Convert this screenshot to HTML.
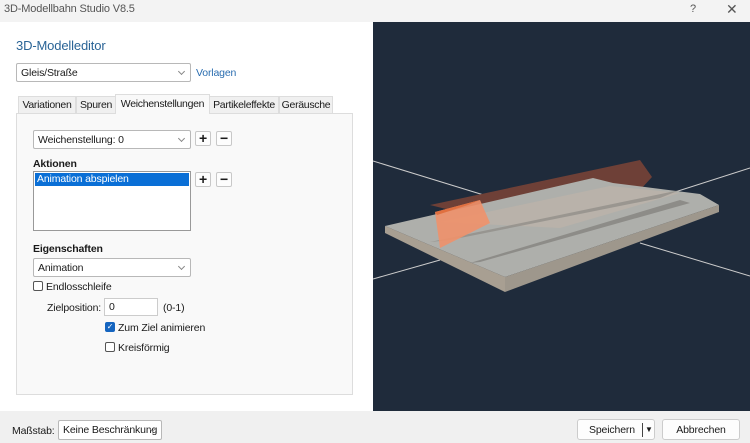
<!DOCTYPE html>
<html><head><meta charset="utf-8"><style>
body{margin:0;width:750px;height:443px;overflow:hidden;font-family:"Liberation Sans",sans-serif;font-size:10.5px;letter-spacing:-0.15px;color:#1a1a1a;background:#fff;position:relative}
.abs{position:absolute;white-space:nowrap}
.title{left:0;top:0;width:750px;height:22px;background:#f3f3f3;color:#555;font-size:11px}
.combo{position:absolute;background:#fff;border:1px solid #b8b8b8;border-radius:2px;box-sizing:border-box;height:19px;line-height:18px;padding-left:4px;white-space:nowrap}
.combo:after{content:"";position:absolute;right:6px;top:5px;width:4px;height:4px;border-right:1px solid #888;border-bottom:1px solid #888;transform:rotate(45deg)}
.btn{position:absolute;width:16px;height:15px;border:1px solid #c8c8c8;border-radius:2px;background:#fdfdfd;box-sizing:border-box;text-align:center;font-weight:bold;line-height:12px;font-size:14px}
.cb{position:absolute;width:10px;height:10px;border:1px solid #555;border-radius:2px;box-sizing:border-box;background:#fff}
.tab{position:absolute;top:96px;height:17px;line-height:17px;background:#f0f0f0;border:1px solid #ddd;border-bottom:none;box-sizing:border-box;text-align:center;white-space:nowrap;letter-spacing:-0.3px}
</style></head><body>
<div class="abs title"><span style="position:absolute;left:4px;top:3px">3D-Modellbahn Studio V8.5</span><span style="position:absolute;left:690px;top:3px">?</span><span style="position:absolute;left:726px;top:1px;font-size:14px">✕</span></div>
<div class="abs" style="left:16px;top:38px;font-size:13px;color:#2a6496">3D-Modelleditor</div>
<div class="combo" style="left:16px;top:63px;width:175px;height:19px">Gleis/Straße</div>
<div class="abs" style="left:196px;top:67px;color:#2a6db0">Vorlagen</div>
<div class="abs" style="left:16px;top:113px;width:337px;height:282px;background:#f9f9f9;border:1px solid #ddd;box-sizing:border-box"></div>
<div class="tab" style="left:18px;width:58px">Variationen</div>
<div class="tab" style="left:76px;width:40px">Spuren</div>
<div class="tab" style="left:115px;top:94px;height:20px;line-height:19px;width:95px;background:#f9f9f9">Weichenstellungen</div>
<div class="tab" style="left:209px;width:70px">Partikeleffekte</div>
<div class="tab" style="left:279px;width:54px">Geräusche</div>
<div class="combo" style="left:33px;top:130px;width:158px">Weichenstellung: 0</div>
<div class="btn" style="left:195px;top:131px">+</div><div class="btn" style="left:216px;top:131px">−</div>
<div class="abs" style="left:33px;top:158px;font-weight:bold">Aktionen</div>
<div class="abs" style="left:33px;top:171px;width:158px;height:60px;background:#fff;border:1px solid #999;box-sizing:border-box"><div style="background:#0a6fd6;color:#fff;margin:1px;height:13px;line-height:13px;padding-left:2px">Animation abspielen</div></div>
<div class="btn" style="left:195px;top:172px">+</div><div class="btn" style="left:216px;top:172px">−</div>
<div class="abs" style="left:33px;top:243px;font-weight:bold">Eigenschaften</div>
<div class="combo" style="left:33px;top:258px;width:158px">Animation</div>
<div class="cb" style="left:33px;top:281px"></div><div class="abs" style="left:46px;top:281px">Endlosschleife</div>
<div class="abs" style="left:47px;top:302px">Zielposition:</div>
<div class="abs" style="left:104px;top:298px;width:54px;height:18px;background:#fff;border:1px solid #ccc;box-sizing:border-box;padding-left:4px;line-height:16px">0</div>
<div class="abs" style="left:163px;top:302px">(0-1)</div>
<div class="cb" style="left:105px;top:322px;background:#1565c0;border-color:#1565c0;color:#fff;font-size:8px;line-height:8px;text-align:center">✓</div><div class="abs" style="left:118px;top:322px">Zum Ziel animieren</div>
<div class="cb" style="left:105px;top:342px"></div><div class="abs" style="left:118px;top:342px">Kreisförmig</div>
<div class="abs" style="left:0;top:411px;width:750px;height:32px;background:#f0f0f0"></div>
<div class="abs" style="left:12px;top:425px">Maßstab:</div>
<div class="combo" style="left:58px;top:420px;width:104px;height:20px;overflow:hidden;padding-right:16px;line-height:19px">Keine Beschränkung</div>
<div class="abs" style="left:577px;top:419px;width:78px;height:21px;background:#fdfdfd;border:1px solid #ccc;border-radius:3px;box-sizing:border-box;line-height:20px;padding-left:11px">Speichern<span style="position:absolute;left:64px;top:3px;height:14px;border-left:1px solid #444"></span><span style="position:absolute;left:67px;top:0;font-size:8px">▼</span></div>
<div class="abs" style="left:662px;top:419px;width:78px;height:21px;background:#fdfdfd;border:1px solid #ccc;border-radius:3px;box-sizing:border-box;line-height:20px;text-align:center">Abbrechen</div>
<svg class="abs" style="left:373px;top:22px" width="377" height="389" viewBox="373 22 377 389">
<rect x="373" y="22" width="377" height="389" fill="#1f2b3b"/>
<line x1="373" y1="161" x2="500" y2="200" stroke="#ccc" stroke-width="1"/>
<line x1="650" y1="200" x2="750" y2="168" stroke="#ccc"/>
<line x1="373" y1="279" x2="440" y2="260" stroke="#ccc"/>
<line x1="640" y1="243" x2="750" y2="276" stroke="#ccc"/>
<polygon points="430,205 640,160 652,177 640,190 470,215" fill="#6e4037"/>
<polygon points="385,226 593,178 613,183 700,194 719,205 505,277" fill="#aeafab"/>
<polygon points="385,226 505,277 505,292 385,233" fill="#a89f92"/>
<polygon points="505,277 719,205 719,212 505,292" fill="#9e978c"/>
<polygon points="440,222 610,186 680,193 560,228" fill="#b9b2aa"/>
<polygon points="430,242 680,190 660,198 450,240" fill="#8d8a84" opacity=".7"/>
<polygon points="470,263 680,200 690,203 480,262" fill="#7f7e79" opacity=".7"/>
<polygon points="435,212 480,200 490,223 440,248" fill="#f0916a" opacity=".9"/>
<polygon points="435,212 480,200 468,205 437,215" fill="#e07040"/>
</svg>
</body></html>
